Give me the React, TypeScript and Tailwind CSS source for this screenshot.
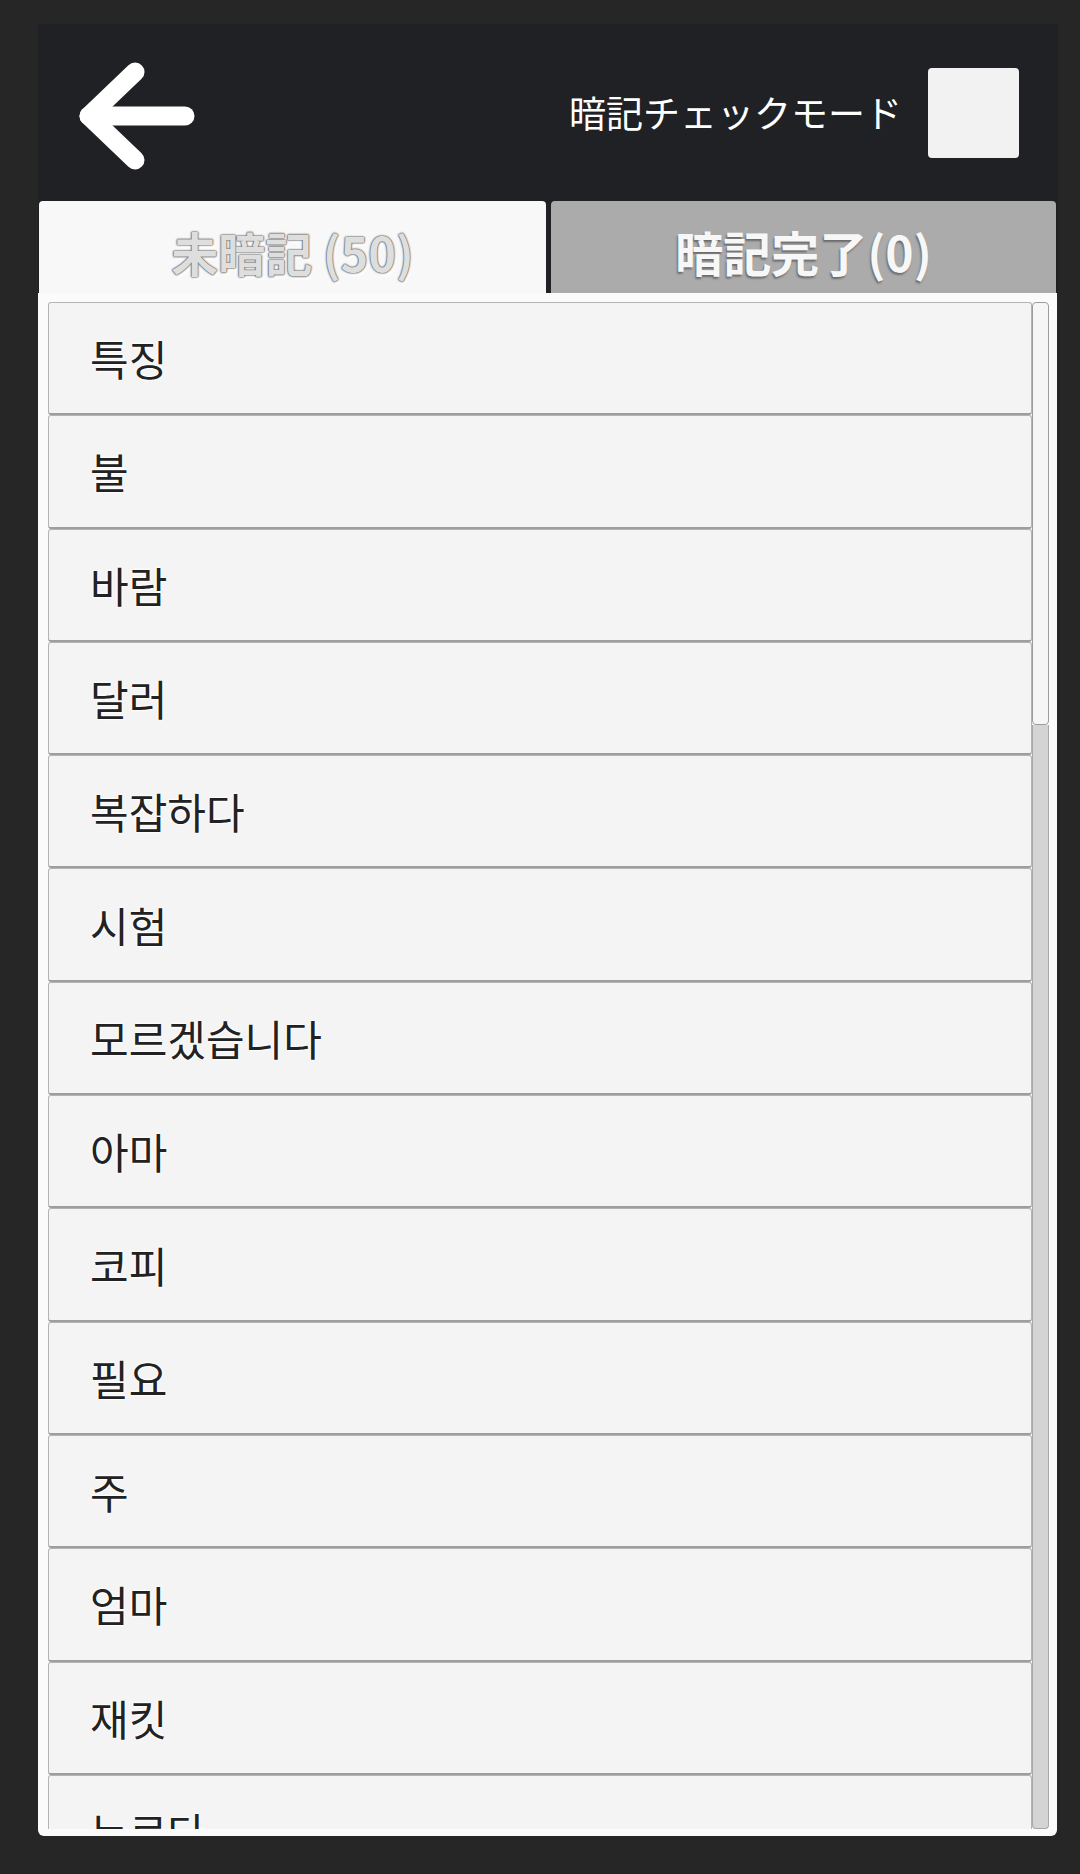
import React from 'react'

const WORDS = [
  '특징',
  '불',
  '바람',
  '달러',
  '복잡하다',
  '시험',
  '모르겠습니다',
  '아마',
  '코피',
  '필요',
  '주',
  '엄마',
  '재킷',
  '누르다',
]

const JP = "font-['Noto_Sans_CJK_JP','Noto_Sans',sans-serif]"
const KR = "font-['Noto_Sans_CJK_KR','Noto_Sans',sans-serif]"

function BackArrow() {
  return (
    <svg width="120" height="112" viewBox="0 0 120 112" className="block shrink-0">
      <g stroke="#ffffff" strokeWidth="19" strokeLinecap="round" strokeLinejoin="round" fill="none">
        <line x1="12" y1="56" x2="108" y2="56" />
        <polyline points="58,12 12,56 58,100" />
      </g>
    </svg>
  )
}

export default function App() {
  return (
    <div className="min-h-[1874px] w-full bg-[#262626] pt-[24px]">
      <div className="ml-[38px] w-[1020px]">
        {/* top bar + tabs */}
        <div className="bg-[#202124]">
          <div className="flex h-[177px] items-center justify-between pl-[39px] pr-[39px]">
            <div className="pt-[6px]">
              <BackArrow />
            </div>
            <div className="flex items-center gap-[26px]">
              <span className={`${JP} text-[37px] leading-none text-white`}>暗記チェックモード</span>
              <div className="h-[90px] w-[91px] rounded-[4px] bg-[#f2f2f2]" />
            </div>
          </div>
          <div className="flex h-[92px] items-stretch gap-[5px] pl-[1px] pr-[2px]">
            <div className="flex w-[507px] items-center justify-center rounded-t-[4px] bg-[#f8f8f8] pt-[8px]">
              <span
                className={`${JP} text-[47px] font-bold leading-none text-[#dedede] [text-shadow:0_0_2px_#666,0_0_2px_#666,0_0_1px_#555,2px_3px_2px_#ffffff]`}
              >
                未暗記 (50)
              </span>
            </div>
            <div className="flex flex-1 items-center justify-center rounded-t-[4px] bg-[#ababab] pt-[8px]">
              <span
                className={`${JP} text-[48px] font-bold leading-none text-[#f7f7f7] [text-shadow:-1px_2px_2px_#6a6a6a]`}
              >
                暗記完了(0)
              </span>
            </div>
          </div>
        </div>

        {/* list panel */}
        <div className="mr-[1px] rounded-b-[6px] bg-[#fbfbfb] pb-[7px] pl-[10px] pr-[8px] pt-[9px]">
          <div className="flex h-[1527px] overflow-hidden">
            <div className="flex-1 overflow-hidden">
              {WORDS.map(w => (
                <div
                  key={w}
                  className="flex h-[113.3px] items-center rounded-[3px] border border-b-2 border-[#b4b4b4] border-b-[#9e9e9e] bg-[#f4f4f4] pl-[41px]"
                >
                  <span
                    className={`${KR} text-[42px] leading-none text-[#222222] [text-shadow:0_0_3px_#ffffff,0_0_3px_#ffffff,0_0_2px_#ffffff]`}
                  >
                    {w}
                  </span>
                </div>
              ))}
            </div>
            <div className="flex w-[17px] flex-col">
              <div className="h-[423px] rounded-[4px] border border-[#9c9c9c] bg-[#f6f6f6]" />
              <div className="flex-1 rounded-b-[4px] border border-t-0 border-[#a8a8a8] bg-[#d4d4d4]" />
            </div>
          </div>
        </div>
      </div>
    </div>
  )
}
